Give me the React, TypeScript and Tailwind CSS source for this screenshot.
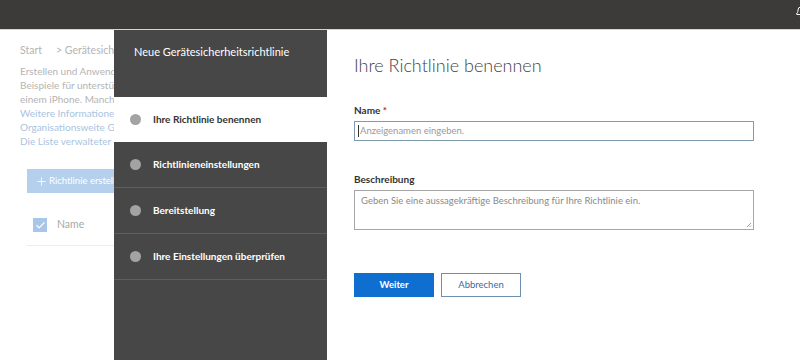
import { Bell, Plus, Check } from "lucide-react";

const steps = [
    "Ihre Richtlinie benennen",
    "Richtlinieneinstellungen",
    "Bereitstellung",
    "Ihre Einstellungen überprüfen",
];

export default function App() {
    return (
        <div
            className="w-[800px] h-[360px] overflow-hidden bg-white flex flex-col"
            style={{ fontFamily: 'Lato, "Open Sans", sans-serif' }}
        >
            {/* top bar */}
            <div className="h-[30px] shrink-0 bg-[#3c3b39] border-b border-[#d4d4d4] flex justify-end overflow-hidden">
                <div className="w-[5px] overflow-hidden pt-[6px]">
                    <Bell size={12} className="text-white" />
                </div>
            </div>

            <div className="flex flex-1 min-h-0">
                {/* faded background page */}
                <div className="w-[114px] shrink-0 overflow-hidden whitespace-nowrap text-[10px] text-[#b4b4b4] pl-5 pt-[12px]">
                    <div className="flex gap-[14px] leading-[16px] text-[10.5px]">
                        <span>Start</span>
                        <span>&gt; Gerätesicherheit</span>
                    </div>
                    <div className="mt-[6px] leading-[14px]">
                        <div>Erstellen und Anwenden von</div>
                        <div>Beispiele für unterstützte</div>
                        <div>einem iPhone. Manche</div>
                        <div className="text-[#a9c4e0]">Weitere Informationen</div>
                        <div className="text-[#a9c4e0]">Organisationsweite Geräte</div>
                        <div className="text-[#a9c4e0]">Die Liste verwalteter Geräte</div>
                    </div>
                    <div className="ml-[7px] mt-[21px] h-6 bg-[#b5d0ec] text-white flex items-center pl-[8px] gap-[1px] text-[9.5px]">
                        <Plus size={13} strokeWidth={1.5} className="shrink-0" />
                        <span>Richtlinie erstellen</span>
                    </div>
                    <div className="ml-[7px] mt-[13px] h-[40px] border-b border-[#ececec] flex items-start pt-[12px] pl-[6px] gap-[10px]">
                        <div className="w-[14px] h-[14px] shrink-0 bg-[#a8c6e8] flex items-center justify-center">
                            <Check size={11} className="text-white" strokeWidth={2.5} />
                        </div>
                        <span className="text-[#a8a8a8] leading-[12px] text-[10.5px]">Name</span>
                    </div>
                </div>

                {/* wizard nav */}
                <div className="w-[213px] shrink-0 bg-[#474747] text-white">
                    <div className="h-[67px] pl-5 pt-[14px] text-[11px] leading-[16px]">
                        Neue Gerätesicherheitsrichtlinie
                    </div>
                    {steps.map((s, i) => (
                        <div
                            key={s}
                            className={
                                i === 0
                                    ? "h-[45px] bg-white text-[#333] flex items-center pl-[16px] gap-[12px] text-[10px] font-bold"
                                    : "h-[46px] border-b border-[#5e5e5e] flex items-center pl-[16px] gap-[12px] text-[10px] font-bold"
                            }
                        >
                            <span className="w-[11px] h-[11px] shrink-0 rounded-full bg-[#a3a3a3]" />
                            <span>{s}</span>
                        </div>
                    ))}
                </div>

                {/* form */}
                <div className="flex-1 pl-[27px] pt-[22px] text-[#333]">
                    <h1 className="text-[18px] font-light leading-[26px] text-[#444]">Ihre Richtlinie benennen</h1>
                    <div className="mt-[25px] text-[10px] font-bold leading-[14px]">
                        Name <span className="text-[#c4262e]">*</span>
                    </div>
                    <div className="mt-[4px] w-[400px] h-[20px] border border-[#7f9cae] flex items-center pl-[3px] text-[9.5px] text-[#9a9a9a]">
                        <span className="w-px h-[12px] bg-[#333] mr-[1px]" />
                        Anzeigenamen eingeben.
                    </div>
                    <div className="mt-[31px] text-[10px] font-bold leading-[14px]">Beschreibung</div>
                    <div className="mt-[4px] w-[400px] h-[40px] border border-[#a6a6a6] px-[6px] pt-[3px] text-[9.5px] text-[#8a8a8a] relative">
                        Geben Sie eine aussagekräftige Beschreibung für Ihre Richtlinie ein.
                        <svg className="absolute right-[1px] bottom-[1px]" width="6" height="6" viewBox="0 0 6 6">
                            <path d="M5 1L1 5M5 3.5L3.5 5" stroke="#888" strokeWidth="0.8" />
                        </svg>
                    </div>
                    <div className="mt-[43px] flex gap-[7px] text-[9.5px]">
                        <button className="w-[80px] h-[24px] bg-[#0f6fd0] text-white font-bold">Weiter</button>
                        <button className="w-[80px] h-[24px] border border-[#6f8fb0] text-[#3b6c9c]">Abbrechen</button>
                    </div>
                </div>
            </div>
        </div>
    );
}
